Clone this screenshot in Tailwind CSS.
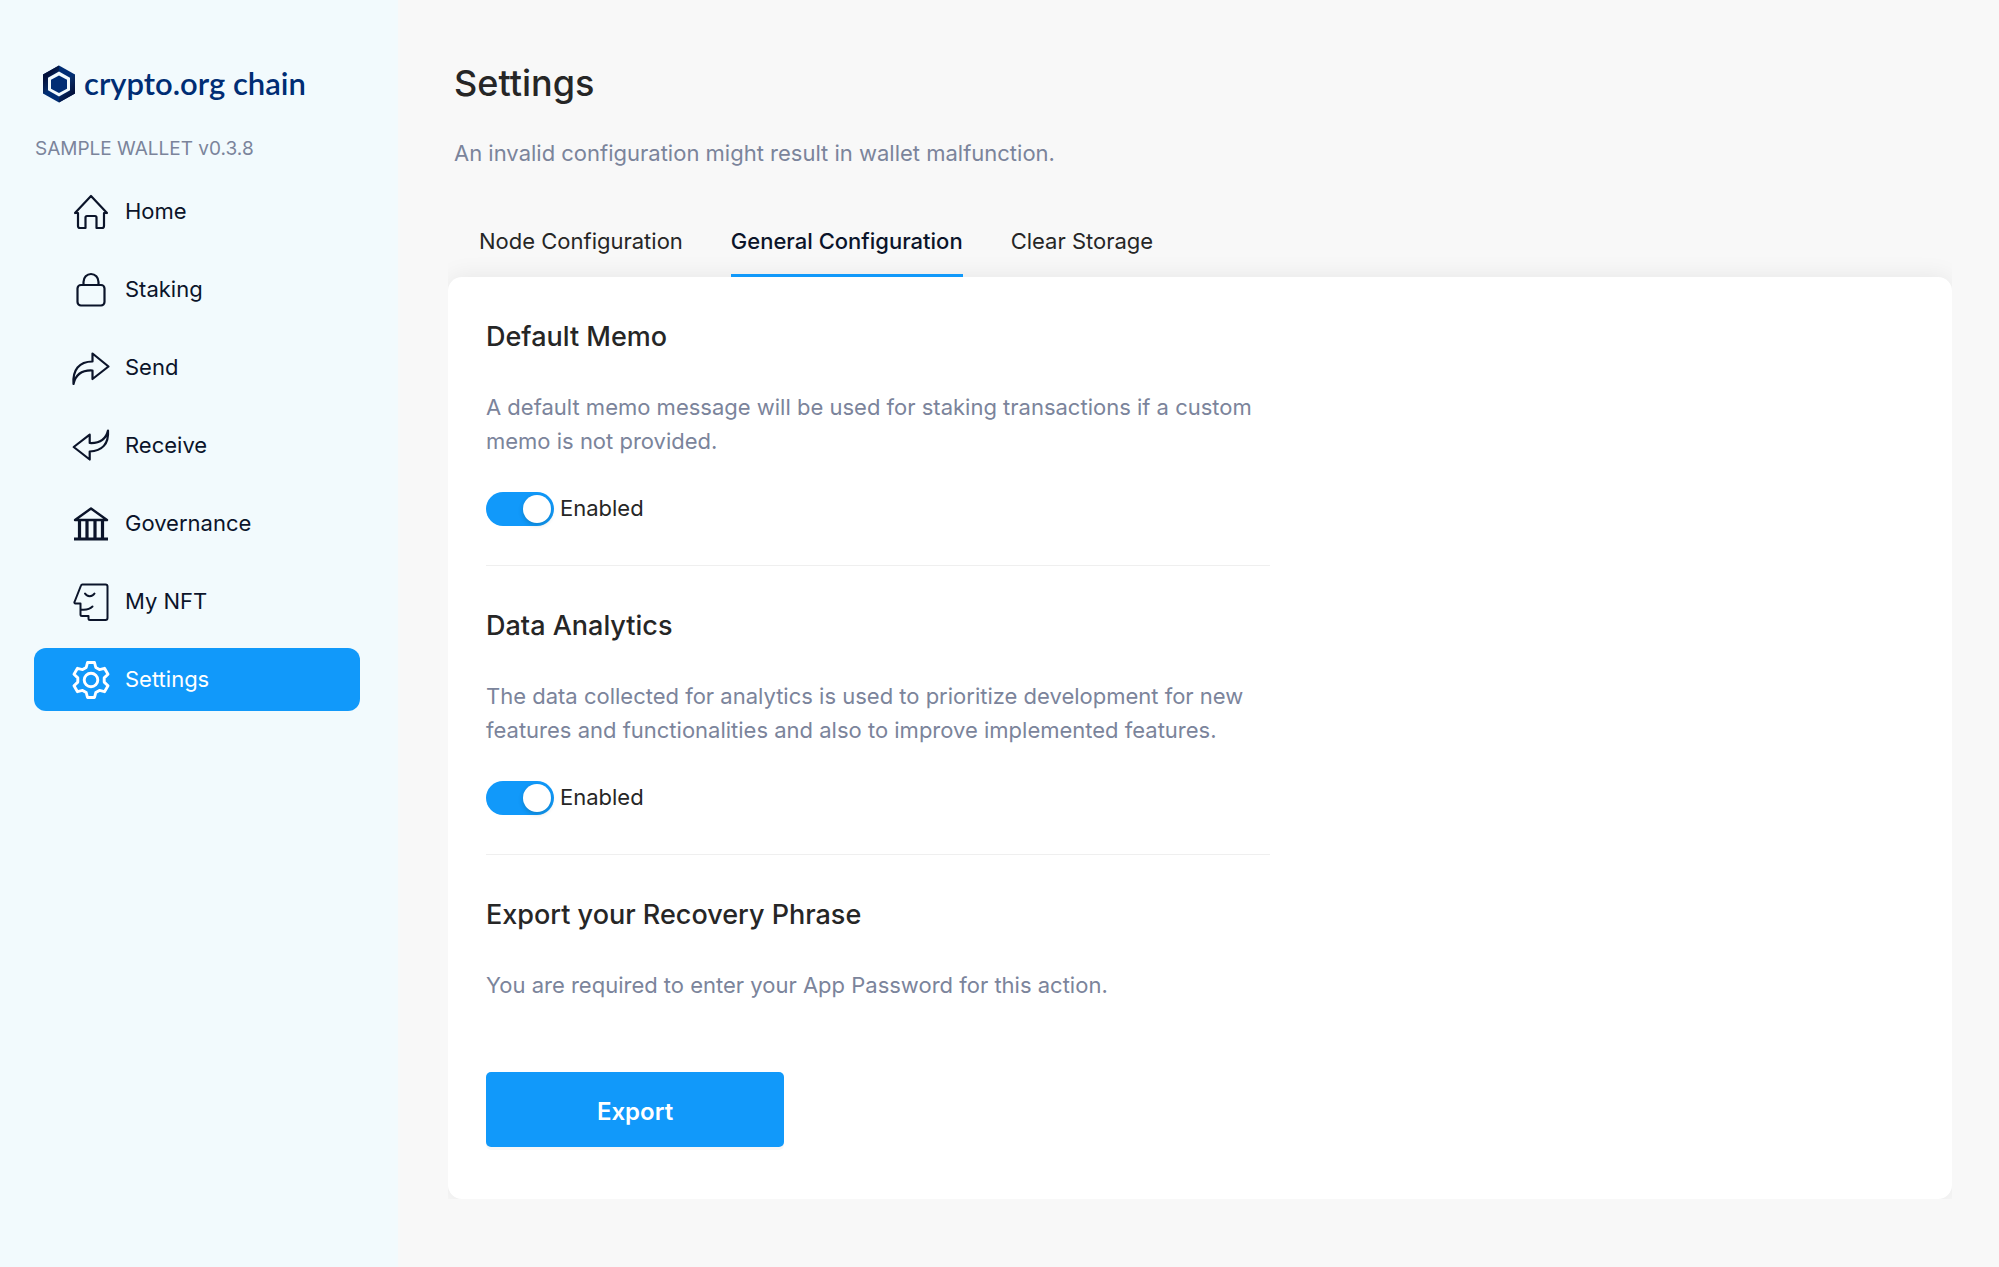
<!DOCTYPE html>
<html lang="en">
<head>
<meta charset="utf-8">
<meta name="viewport" content="width=device-width, initial-scale=1">
<title>Settings</title>
<script src="https://cdn.jsdelivr.net/npm/@tailwindcss/browser@4"></script>
</head>
<body class="flex min-h-screen bg-[#f8f8f8] font-['Inter',sans-serif] text-[#262626]">
  <aside class="w-[398px] shrink-0 bg-[#f2fafd] pt-16 pr-[38px] pl-[34px]">
    <a href="#" class="flex h-10 items-center gap-[6px] pl-2 font-['Lato',sans-serif] text-[31px] leading-9 font-semibold text-[#002d74]">
      <svg class="h-10 w-9" viewBox="0 0 36 40" aria-hidden="true">
        <defs>
          <linearGradient id="ring" x1="0" y1="0" x2="1" y2="1">
            <stop offset="0.2" stop-color="#03103a"/><stop offset="0.5" stop-color="#0a3a7e"/><stop offset="0.85" stop-color="#03103a"/>
          </linearGradient>
        </defs>
        <path d="M17 1.500 33 10.500V29.500L17 38.500 1 29.500V10.500Z" fill="#002d74"/>
        <path d="M17 1.500V7.500L6 13.500V26.500L1 29.500V10.500ZM33 10.500V29.500L17 38.500V32.500L28 26.500V13.500Z" fill="url(#ring)"/>
        <path d="M17 7.500 28 13.700V26.300L17 32.500 6 26.300V13.700Z" fill="#f2fafd"/>
        <path d="M17 11.500 25 15.800V24.700L17 29 9 24.700V15.800Z" fill="#002d74"/>
      </svg>
      <span class="pb-[2px]">crypto.org chain</span>
    </a>
    <p class="mt-[33px] pl-px text-[19px] leading-6 text-[#7b849b]">SAMPLE WALLET v0.3.8</p>
    <nav class="mt-[19px] flex flex-col gap-[15px] text-[22px] text-[#0b142a]" aria-label="Main">
      <a href="#" class="flex h-[63px] items-center gap-[14px] pl-[37px]">
        <svg class="size-10" viewBox="0 0 40 40" fill="none" stroke="currentColor" stroke-width="2.2" stroke-linecap="round" stroke-linejoin="round"><path d="M4 21 20 4 36 21M4 21H7V34a2 2 0 0 0 2 2h5.500V25.500a1.500 1.500 0 0 1 1.500-1.500h8a1.500 1.500 0 0 1 1.500 1.500V36H31a2 2 0 0 0 2-2V21h3"/></svg>
        Home</a>
      <a href="#" class="flex h-[63px] items-center gap-[14px] pl-[37px]">
        <svg class="size-10" viewBox="0 0 40 40" fill="none" stroke="currentColor" stroke-width="2.2"><rect x="6.500" y="15" width="27" height="20.500" rx="3.500"/><path d="M12.500 15v-3a7.500 8 0 0 1 15 0v3"/></svg>
        Staking</a>
      <a href="#" class="flex h-[63px] items-center gap-[14px] pl-[37px]">
        <svg class="size-10" viewBox="0 0 40 40" fill="none" stroke="currentColor" stroke-width="2.2" stroke-linejoin="round"><path d="M21.500 5.500 37.500 18.500 21.500 31V22.500C12 22 5 25 2.500 36 1.500 22 8 13.500 21.500 13.500Z"/></svg>
        Send</a>
      <a href="#" class="flex h-[63px] items-center gap-[14px] pl-[37px]">
        <svg class="size-10" viewBox="0 0 40 40" fill="none" stroke="currentColor" stroke-width="2.2" stroke-linejoin="round"><path d="M18.700 8.700 2.700 21 18.700 33.500V25.500C31 25 38 18 37 4.500 35 13 29 17.500 18.700 17Z"/></svg>
        Receive</a>
      <a href="#" class="flex h-[63px] items-center gap-[14px] pl-[37px]">
        <svg class="size-10" viewBox="0 0 40 40" fill="none" stroke="currentColor" stroke-width="2.400" stroke-linejoin="round"><path d="M4 16 20 4.500 36 16Z"/><path d="M3 35H37" stroke-width="3"/><path d="M8.500 16V35M16 16V35M24 16V35M31.500 16V35" stroke-width="3.200"/></svg>
        Governance</a>
      <a href="#" class="flex h-[63px] items-center gap-[14px] pl-[37px]">
        <svg class="size-10" viewBox="0 0 40 40" fill="none" stroke="currentColor" stroke-width="2" stroke-linecap="round" stroke-linejoin="round"><path d="M11.500 2.500H34.500a2 2 0 0 1 2 2V36a2 2 0 0 1-2 2H19a1.500 1.500 0 0 1-1.500-1.500V34H11a1.500 1.500 0 0 1-1.500-1.500V21.500H4.500a1 1 0 0 1-1-1.500L10 3.500a1.500 1.500 0 0 1 1.500-1ZM14 11.500c2 3.500 7.500 3.500 9.500 0M10 27.500c4 .5 8.500 0 11.500-3"/></svg>
        My NFT</a>
      <a href="#" aria-current="page" class="flex h-[63px] items-center gap-[14px] rounded-xl bg-[#1199fa] pl-[37px] text-white">
        <svg class="size-10" viewBox="0 0 40 40" fill="none" stroke="currentColor" stroke-width="2.900" stroke-linejoin="round"><circle cx="20" cy="20" r="6.800"/><path d="M15.200 7.500 16.500 2.500H23.500L24.800 7.500 28.400 9.600 33.500 8.300 37 14.200 33.200 17.900V22.100L37 25.800 33.500 31.700 28.400 30.400 24.800 32.500 23.500 37.500H16.500L15.200 32.500 11.600 30.400 6.500 31.700 3 25.800 6.800 22.100V17.900L3 14.200 6.500 8.300 11.600 9.600Z"/></svg>
        Settings</a>
    </nav>
  </aside>

  <main class="min-w-0 flex-1 pt-[60px] pr-[47px] pb-[68px] pl-[50px]">
    <h1 class="pl-[6px] text-4xl leading-[46px] font-medium">Settings</h1>
    <p class="mt-[30px] pl-[6px] text-[22px] leading-[34px] text-[#7b849b]">An invalid configuration might result in wallet malfunction.</p>

    <div class="mt-[35px] overflow-hidden">
      <div role="tablist" class="flex h-[72px] gap-12 pl-[31px] text-[22px]">
        <button role="tab" aria-selected="false" class="relative z-10 border-b-3 border-transparent pt-[3px]">Node Configuration</button>
        <button role="tab" aria-selected="true" class="relative z-10 border-b-3 border-[#1199fa] pt-[3px] font-medium text-[#0b142a]">General Configuration</button>
        <button role="tab" aria-selected="false" class="relative z-10 border-b-3 border-transparent pt-[3px]">Clear Storage</button>
      </div>

      <div role="tabpanel" class="rounded-[14px] bg-white px-[38px] pb-[52px] shadow-[0_0_24px_rgba(0,0,0,0.08)]">
        <section class="max-w-[784px] border-b border-[#efefef] pt-[38px] pb-[39px]">
          <h2 class="text-[27px] leading-11 font-medium">Default Memo</h2>
          <p class="mt-[31px] text-[22px] leading-[34px] text-[#7b849b]">A default memo message will be used for staking transactions if a custom memo is not provided.</p>
          <label class="mt-[34px] flex h-[34px] w-fit items-center gap-[6px] text-[22px]">
            <input type="checkbox" role="switch" checked class="h-[34px] w-[68px] appearance-none rounded-full bg-gray-300 p-[3px] before:block before:size-7 before:rounded-full before:bg-white before:shadow-[0_2px_5px_rgba(0,35,11,0.2)] checked:bg-[#1199fa] checked:before:ml-auto">
            <span class="pb-[2px]">Enabled</span>
          </label>
        </section>

        <section class="max-w-[784px] border-b border-[#efefef] pt-[38px] pb-[39px]">
          <h2 class="text-[27px] leading-11 font-medium">Data Analytics</h2>
          <p class="mt-[31px] text-[22px] leading-[34px] text-[#7b849b]">The data collected for analytics is used to prioritize development for new features and functionalities and also to improve implemented features.</p>
          <label class="mt-[34px] flex h-[34px] w-fit items-center gap-[6px] text-[22px]">
            <input type="checkbox" role="switch" checked class="h-[34px] w-[68px] appearance-none rounded-full bg-gray-300 p-[3px] before:block before:size-7 before:rounded-full before:bg-white before:shadow-[0_2px_5px_rgba(0,35,11,0.2)] checked:bg-[#1199fa] checked:before:ml-auto">
            <span class="pb-[2px]">Enabled</span>
          </label>
        </section>

        <section class="max-w-[784px] pt-[38px]">
          <h2 class="text-[27px] leading-11 font-medium">Export your Recovery Phrase</h2>
          <p class="mt-[31px] text-[22px] leading-[34px] text-[#7b849b]">You are required to enter your App Password for this action.</p>
          <button class="mt-[70px] h-[75px] w-[298px] rounded-[5px] bg-[#1199fa] pt-1 text-2xl font-semibold text-white shadow-[0_3px_0_rgba(0,0,0,0.03)]">Export</button>
        </section>
      </div>
    </div>
  </main>
</body>
</html>
